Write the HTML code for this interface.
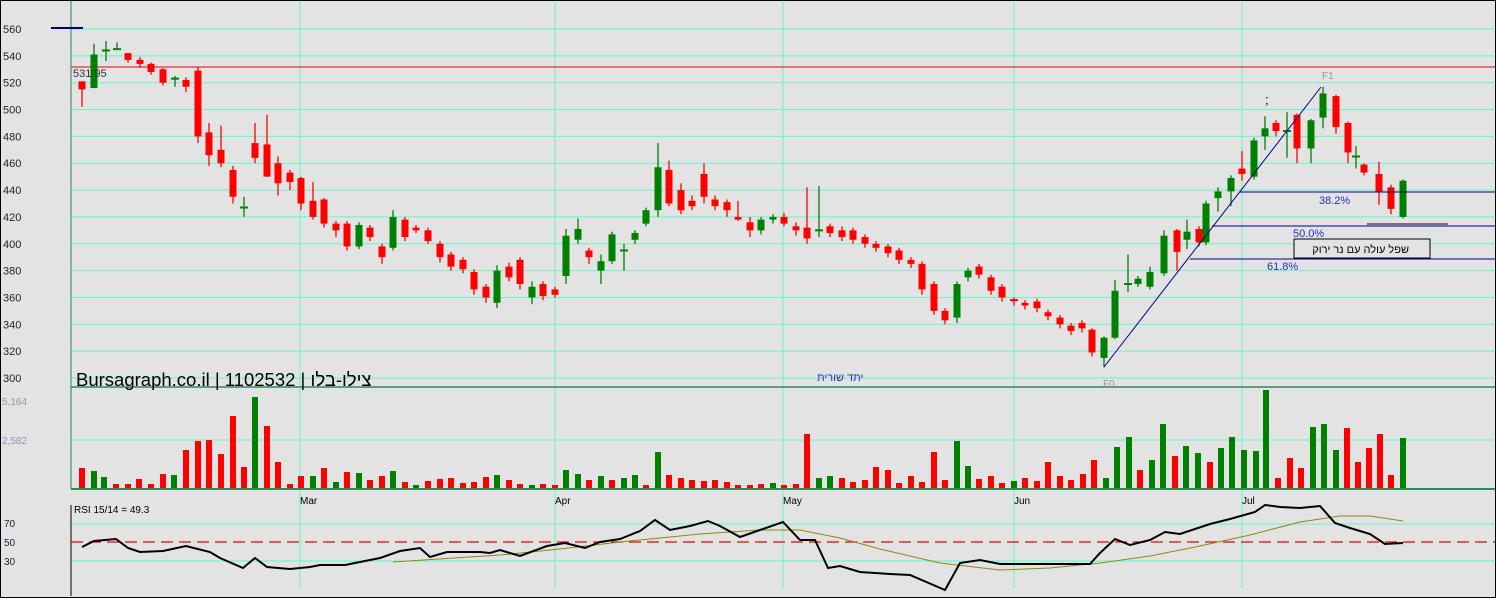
<!DOCTYPE html><html><head><meta charset="utf-8"><style>
body{margin:0;background:#e3e3e3;}
svg{display:block;font-family:"Liberation Sans","Noto Sans CJK JP",sans-serif;}
</style></head><body>
<svg id="s" width="1496" height="598" xmlns="http://www.w3.org/2000/svg">
<rect x="0" y="0" width="1496" height="598" fill="#e3e3e3"/>
<g id="grid"></g>
<line x1="71" y1="67" x2="1496" y2="67" stroke="#e00" stroke-width="1"/>
<g id="cand"></g>
<g id="vol"></g>
<line x1="71" y1="387" x2="1496" y2="387" stroke="#2a8a5a" stroke-width="1.5"/>
<line x1="71" y1="489" x2="1496" y2="489" stroke="#2a8a5a" stroke-width="2"/>
<line x1="71" y1="0" x2="71" y2="489" stroke="#2a8a5a" stroke-width="1"/>
<line x1="71" y1="505" x2="71" y2="596" stroke="#000" stroke-width="1"/>
<line x1="71" y1="542" x2="1496" y2="542" stroke="#e00" stroke-width="1.2" stroke-dasharray="12,6"/>
<polyline fill="none" stroke="#8a8a10" stroke-width="1" points="393,562 500,555 560,549 620,542 700,534 760,530 800,530 840,538 880,549 940,563 1000,570 1050,568 1100,563 1150,556 1200,546 1250,535 1300,522 1340,516 1370,516 1403,521"/>
<polyline fill="none" stroke="#000" stroke-width="2" points="82,547 94,541 116,539 128,548 140,552 163,551 186,546 210,552 220,558 243,568 255,558 267,567 290,569 310,567 320,565 345,565 380,558 400,551 420,548 430,557 447,552 480,552 490,553 500,550 520,556 547,546 565,543 585,548 600,542 620,539 640,531 655,520 670,530 690,526 708,521 720,526 740,537 760,530 783,522 800,540 815,540 828,568 840,566 860,572 890,574 910,575 945,590 960,563 980,560 1000,564 1020,564 1060,564 1090,564 1100,553 1115,539 1130,545 1150,540 1165,532 1180,534 1195,529 1210,524 1230,519 1255,512 1265,505 1280,507 1300,508 1320,506 1335,523 1350,528 1370,534 1385,544 1403,543"/>
<line x1="1104" y1="367" x2="1321" y2="87" stroke="#000080" stroke-width="1"/>
<line x1="1240" y1="192" x2="1496" y2="192" stroke="#000080"/>
<line x1="1212" y1="226" x2="1496" y2="226" stroke="#000080"/>
<line x1="1190" y1="259" x2="1496" y2="259" stroke="#000080"/>
<line x1="1367" y1="224" x2="1448" y2="224" stroke="#000"/>
<rect x="1294" y="239" width="136" height="19" fill="#e3e3e3" stroke="#000"/>
<text x="1409" y="253" font-size="11" text-anchor="end" fill="#000">שפל עולה עם נר ירוק</text>
<text x="1319" y="204" font-size="11" fill="#2030c0">38.2%</text>
<text x="1293" y="237" font-size="11" fill="#2030c0">50.0%</text>
<text x="1267" y="270" font-size="11" fill="#2030c0">61.8%</text>
<text x="1322" y="79" font-size="10" fill="#999">F1</text>
<text x="1103" y="387" font-size="10" fill="#999">F0</text>
<text x="1265" y="104" font-size="13" fill="#000">;</text>
<text x="73" y="77" font-size="11" fill="#334">531.95</text>
<line x1="51" y1="28" x2="83" y2="28" stroke="#000080" stroke-width="2"/>
<text x="817" y="381" font-size="11" fill="#2030c0">יתד שורית</text>
<text x="76" y="386" font-size="18.5" fill="#000">Bursagraph.co.il | 1102532 | צילו-בלו</text>
<g id="ax" font-size="11"></g>
<text x="74" y="513" font-size="10" fill="#000">RSI 15/14 = 49.3</text>
<rect x="0.5" y="0.5" width="1495" height="597" fill="none" stroke="#000"/>
</svg>
<script>
var NS="http://www.w3.org/2000/svg";
function el(p,t,a){var e=document.createElementNS(NS,t);for(var k in a)e.setAttribute(k,a[k]);document.getElementById(p).appendChild(e);return e;}
function Y(p){return 29+(560-p)*1.3423;}
var G="#66f5c8";
for(var p=300;p<=560;p+=20){el("grid","line",{x1:71,x2:1496,y1:Y(p),y2:Y(p),stroke:G});var t=el("ax","text",{x:3,y:Y(p)+4,fill:"#223"});t.textContent=p;}
[440].forEach(function(y){el("grid","line",{x1:71,x2:1496,y1:y,y2:y,stroke:G});});
[524,561].forEach(function(y){el("grid","line",{x1:71,x2:1496,y1:y,y2:y,stroke:G});});
[[70,527],[50,546],[30,565]].forEach(function(a){var t=el("ax","text",{x:4,y:a[1],fill:"#223","font-size":10});t.textContent=a[0];});
[["5,164",405],["2,582",444]].forEach(function(a){var t=el("ax","text",{x:2,y:a[1],fill:"#8a9aa8","font-size":10});t.textContent=a[0];});
[[300,"Mar"],[555,"Apr"],[783,"May"],[1014,"Jun"],[1242,"Jul"]].forEach(function(a){el("grid","line",{x1:a[0],x2:a[0],y1:0,y2:588,stroke:G});var t=el("ax","text",{x:a[0],y:504,fill:"#000","font-size":10});t.textContent=a[1];});
var C=[[82,521,515,521,502],[94,516,541,549,516],[106,544,544,551,536],[117,545,545,550,545],[128,542,537,542,535],[140,537,534,539,531],[151,534,528,535,526],[163,530,520,531,518],[175,523,523,525,517],[186,522,517,524,513],[198,529,480,532,475],[209,483,466,490,458],[221,470,460,488,457],[233,455,435,458,430],[244,427,427,435,420],[255,475,464,490,460],[267,474,450,496,450],[278,460,445,465,436],[290,453,446,455,440],[301,449,430,450,425],[313,432,420,446,418],[324,433,415,434,412],[336,415,410,417,405],[347,415,398,417,395],[359,398,414,416,396],[370,412,405,414,402],[382,398,390,400,385],[393,397,420,425,395],[405,418,405,420,402],[416,412,410,414,408],[428,410,402,412,400],[440,400,390,402,386],[451,392,383,394,380],[463,388,381,390,378],[474,379,366,381,362],[486,368,360,370,356],[497,356,380,384,352],[509,383,375,386,372],[520,388,370,390,366],[532,360,368,372,355],[543,370,361,372,358],[555,366,362,368,360],[566,376,406,411,370],[578,403,411,419,400],[589,395,390,397,385],[601,380,387,392,370],[612,387,407,409,385],[624,395,395,400,380],[635,403,408,410,400],[646,415,425,427,413],[658,425,457,475,420],[669,455,430,462,428],[681,440,425,445,422],[692,432,428,436,425],[704,452,435,460,430],[715,433,428,436,425],[727,431,425,433,420],[738,420,418,432,417],[750,416,410,420,405],[761,410,418,420,407],[773,418,420,422,415],[784,420,415,423,413],[796,413,410,416,406],[807,412,404,442,400],[819,410,410,443,405],[830,413,408,415,405],[842,410,405,413,402],[853,410,403,412,400],[865,405,400,407,397],[876,400,397,402,394],[888,398,393,400,390],[899,395,388,397,385],[911,388,385,390,382],[922,385,366,387,362],[934,370,350,372,347],[945,350,343,352,340],[957,345,370,372,341],[968,375,380,382,372],[979,383,377,385,374],[991,375,365,377,362],[1002,368,360,370,357],[1014,358,357,360,354],[1025,356,354,358,351],[1037,357,352,359,349],[1048,349,346,351,343],[1060,345,340,347,337],[1071,339,335,341,332],[1082,341,337,343,334],[1092,336,319,337,316],[1104,315,330,331,308],[1115,330,365,373,329],[1128,370,370,392,364],[1138,370,374,376,368],[1150,368,379,383,366],[1164,378,406,410,376],[1177,410,394,411,380],[1187,403,409,418,396],[1199,411,401,413,398],[1206,401,430,432,399],[1218,434,439,442,424],[1231,439,449,451,428],[1242,456,452,469,447],[1254,450,477,479,448],[1265,480,486,495,470],[1276,490,484,492,480],[1287,484,484,498,464],[1297,496,471,497,460],[1311,471,492,493,460],[1323,494,512,517,486],[1336,510,487,511,482],[1348,490,468,491,460],[1356,465,465,473,456],[1364,459,453,460,451],[1379,452,439,461,429],[1391,442,426,444,422],[1403,420,447,448,419]];
C.forEach(function(c){var x=c[0],o=c[1],cl=c[2],col=cl>=o?"#008000":"#ff0000";
el("cand","line",{x1:x,x2:x,y1:Y(c[3]),y2:Y(c[4]),stroke:col,"stroke-width":1.3});
var t=Y(Math.max(o,cl)),b=Y(Math.min(o,cl));if(b-t<2){el("cand","rect",{x:x-4,y:t-1,width:8,height:2,fill:col});}else el("cand","rect",{x:x-3.5,y:t,width:7,height:b-t,fill:col});});
var V="82 468 r,94 471 g,104 477 g,116 484 r,128 484 r,139 479 r,151 484 r,163 474 r,174 475 g,186 450 r,198 441 r,209 440 r,221 454 r,233 416 r,244 467 r,255 397 g,267 426 r,278 462 r,290 484 r,301 476 r,313 476 g,324 468 r,336 482 g,347 472 r,359 473 g,370 480 r,382 476 r,393 471 g,405 482 r,416 485 g,428 481 r,440 479 r,451 478 r,463 483 r,474 482 r,486 477 r,497 475 g,509 480 r,520 484 r,532 485 g,543 484 r,555 485 r,566 470 g,578 474 g,589 480 r,601 476 g,612 480 r,624 478 g,635 475 g,646 485 r,658 452 g,669 475 r,681 478 r,692 480 r,704 481 r,715 480 r,727 482 r,738 485 r,750 485 r,761 484 r,773 483 g,784 485 r,796 484 r,807 434 r,819 478 g,830 476 g,842 478 r,853 482 r,865 480 r,876 467 r,888 470 r,899 483 r,911 476 r,922 482 r,934 452 r,945 480 r,957 441 g,968 466 g,979 479 r,991 476 r,1002 483 r,1014 481 g,1025 478 r,1037 481 r,1048 462 r,1060 476 r,1071 480 r,1083 474 r,1094 460 r,1106 478 g,1117 447 g,1129 437 g,1140 470 r,1152 460 g,1163 424 g,1175 456 r,1186 446 g,1198 453 g,1210 462 r,1221 448 g,1232 437 g,1244 450 g,1256 451 g,1266 390 g,1278 478 r,1290 458 r,1301 468 r,1313 427 g,1324 424 g,1336 450 g,1347 428 r,1358 462 r,1369 448 r,1380 434 r,1391 475 r,1403 438 g".split(",");
V.forEach(function(s){var a=s.split(" ");var x=+a[0],y=+a[1];el("vol","rect",{x:x-3,y:y,width:6,height:489-y,fill:a[2]=="g"?"#008000":"#ff0000"});});
</script>
</body></html>
